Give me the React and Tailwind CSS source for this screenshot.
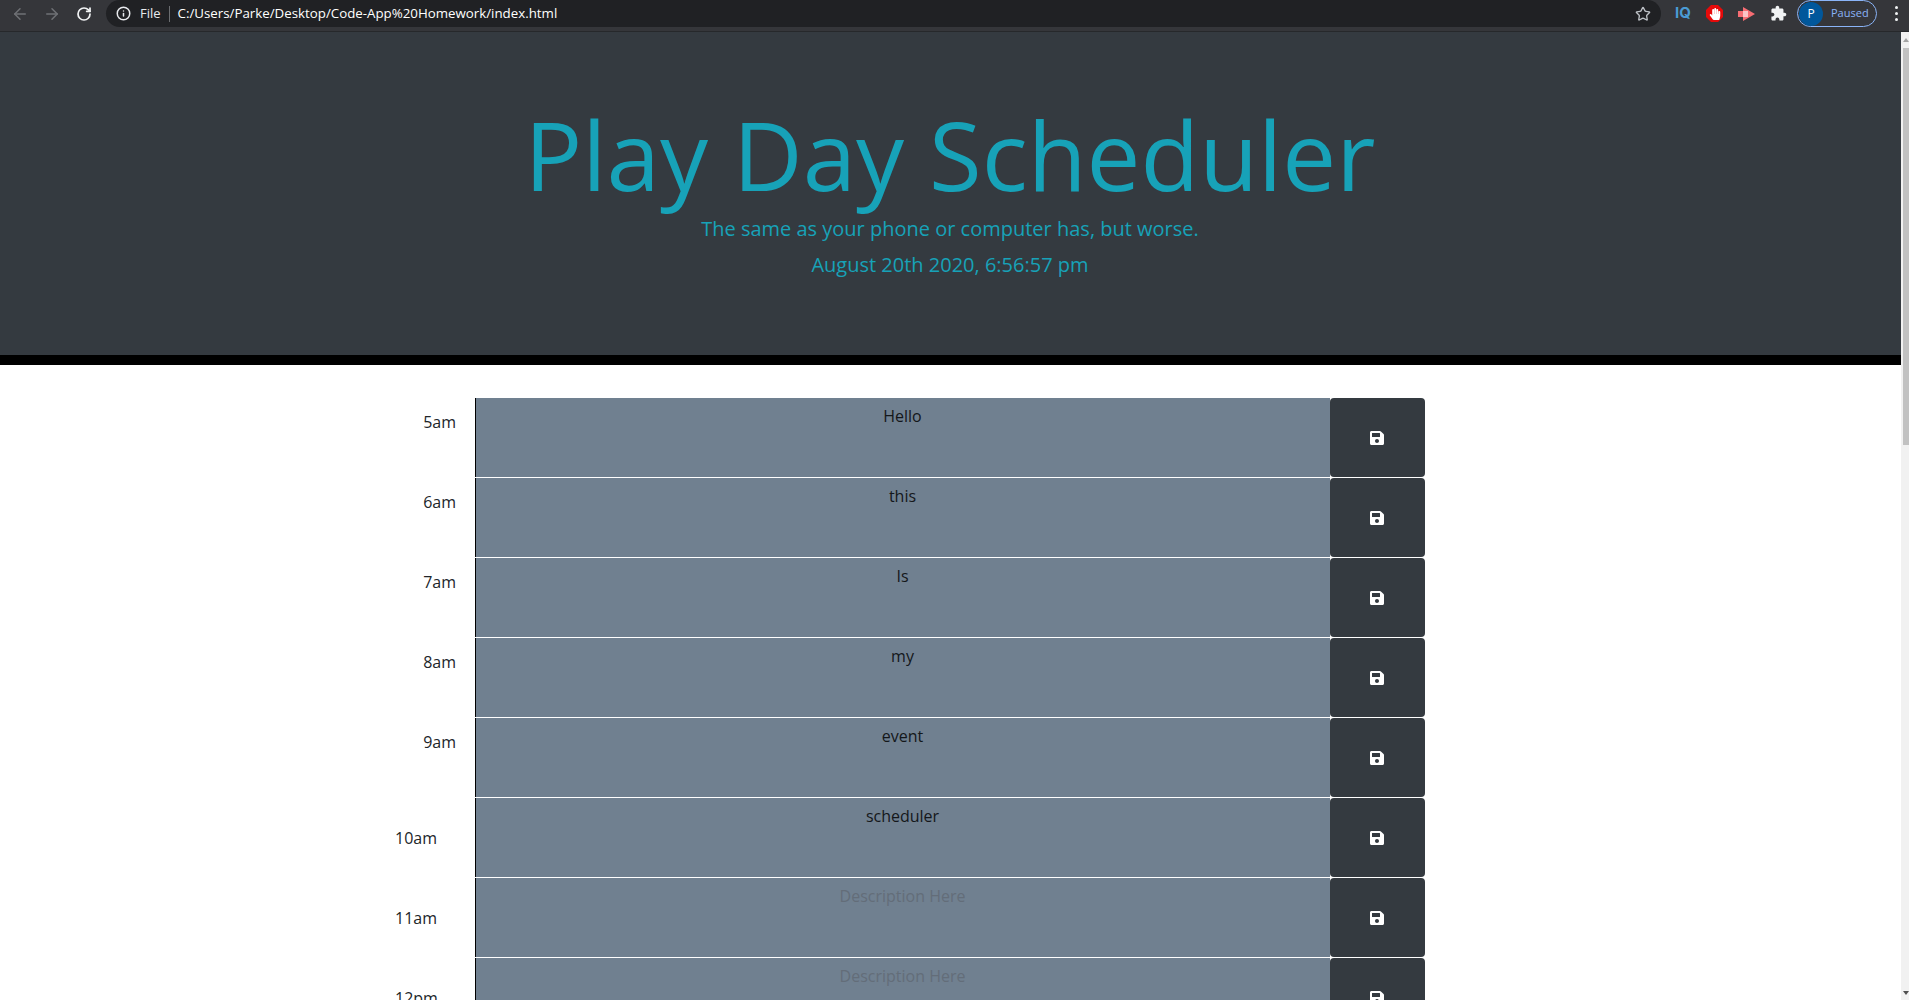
import React from 'react';
import { ArrowLeft, ArrowRight, RotateCw, Info, Star } from 'lucide-react';
import { FaSave, FaHandPaper } from 'react-icons/fa';

const hours = [
  { label: '5am', text: 'Hello', narrow: true },
  { label: '6am', text: 'this', narrow: true },
  { label: '7am', text: 'Is', narrow: true },
  { label: '8am', text: 'my', narrow: true },
  { label: '9am', text: 'event', narrow: true },
  { label: '10am', text: 'scheduler' },
  { label: '11am', text: '' },
  { label: '12pm', text: '' },
];

const Toolbar = () => (
  <div className="flex h-8 shrink-0 items-start border-b border-[#26282b] bg-[#35363a] font-['Open_Sans',sans-serif] text-[13px]">
    <div className="flex h-[27px] w-[106px] shrink-0 items-center pl-[11px] gap-[14px]">
      <ArrowLeft size={18} className="text-[#6f7175]" />
      <ArrowRight size={18} className="text-[#6f7175]" />
      <RotateCw size={16} strokeWidth={2.6} className="text-[#f1f3f4] ml-[1px]" />
    </div>
    <div className="flex h-[27px] flex-1 items-center rounded-full bg-[#202124] pl-[10px] pr-[10px] text-[#e8eaed]">
      <Info size={15} strokeWidth={2.4} className="shrink-0" />
      <span className="ml-[9px]">File</span>
      <span className="ml-[8px] h-[16px] w-px bg-[#6b6d70]" />
      <span className="ml-[8px] text-[13.3px] text-white">C:/Users/Parke/Desktop/Code-App%20Homework/index.html</span>
      <Star size={16} className="ml-auto text-[#bdc1c6]" />
    </div>
    <div className="flex h-[27px] w-[248px] shrink-0 items-center">
      <span className="ml-[14px] w-[20px] font-['Inter',sans-serif] text-[15px] font-bold text-[#4a9bd4]">IQ</span>
      <svg className="ml-[11px]" width="17" height="17" viewBox="0 0 17 17">
        <path d="M5 0h7l5 5v7l-5 5H5l-5-5V5z" fill="#e60a0a" />
      </svg>
      <FaHandPaper size={12} className="-ml-[14.5px] mr-[2.5px] text-white" />
      <svg className="ml-[15px]" width="17" height="14" viewBox="0 0 17 14">
        <path d="M0 4h5V0l12 7-12 7v-4H0z" fill="#f76d73" />
        <path d="M5 4h5v6H5z" fill="#fbc3c6" />
      </svg>
      <svg className="ml-[15px] text-[#f1f3f4]" width="17" height="17" viewBox="0 0 24 24" fill="currentColor">
        <path d="M20.5 11H19V7c0-1.1-.9-2-2-2h-4V3.5C13 2.12 11.88 1 10.5 1S8 2.12 8 3.5V5H4c-1.1 0-1.99.9-1.99 2v3.8H3.5c1.49 0 2.7 1.21 2.7 2.7s-1.21 2.7-2.7 2.7H2V20c0 1.1.9 2 2 2h3.8v-1.5c0-1.49 1.21-2.7 2.7-2.7 1.49 0 2.7 1.21 2.7 2.7V22H17c1.1 0 2-.9 2-2v-4h1.5c1.38 0 2.5-1.12 2.5-2.5S21.88 11 20.5 11z" />
      </svg>
      <div className="ml-[10px] flex h-[27px] w-[80px] items-center rounded-full border border-[#8ab4f8] pl-[1px]">
        <span className="flex h-6 w-6 items-center justify-center rounded-full bg-[#01579b] text-[12px] text-white">P</span>
        <span className="ml-[8px] text-[11px] text-[#8ab4f8]">Paused</span>
      </div>
      <div className="ml-[18px] flex flex-col gap-[3px]">
        <span className="h-[3px] w-[3px] rounded-full bg-[#f1f3f4]" />
        <span className="h-[3px] w-[3px] rounded-full bg-[#f1f3f4]" />
        <span className="h-[3px] w-[3px] rounded-full bg-[#f1f3f4]" />
      </div>
    </div>
  </div>
);

const Row = ({ label, text, narrow }) => (
  <div className="flex h-20 border-b border-white">
    <div
      className={
        narrow
          ? 'w-[95px] shrink-0 pt-[12px] pr-[19px] text-right text-[#212529]'
          : 'w-[95px] shrink-0 self-center pl-[15px] text-[#212529]'
      }
    >
      {label}
    </div>
    <textarea
      readOnly
      value={text}
      placeholder="Description Here"
      className="min-w-0 flex-1 resize-none border-l border-black bg-[#708090] pt-[6px] pr-px text-center text-[#14171a] outline-none placeholder:text-[#636d79]"
    />
    <button className="flex w-[95px] shrink-0 items-center justify-center rounded-[4px] bg-[#343a40] pr-px text-white">
      <FaSave size={16} />
    </button>
  </div>
);

const Scrollbar = () => (
  <div className="relative w-2 shrink-0 bg-[#f1f1f1]">
    <svg className="absolute left-[2px] top-[6px]" width="6" height="4" viewBox="0 0 6 4">
      <path d="M3 0l3 4H0z" fill="#a3a3a3" />
    </svg>
    <div className="absolute left-[2px] right-0 top-[16px] h-[397px] bg-[#c1c1c1]" />
    <svg className="absolute bottom-[5px] left-[2px]" width="6" height="4" viewBox="0 0 6 4">
      <path d="M0 0h6L3 4z" fill="#505050" />
    </svg>
  </div>
);

const App = () => (
  <div className="flex h-screen flex-col overflow-hidden bg-white font-['Open_Sans',sans-serif] text-base">
    <Toolbar />
    <div className="flex min-h-0 flex-1">
      <main className="min-w-0 flex-1 overflow-hidden">
        <header className="flex h-[333px] flex-col items-center border-b-[10px] border-black bg-[#343a40] pt-[64px] pr-px text-[#17a2b8]">
          <h1 className="text-[96px] font-normal leading-[115px]">Play Day Scheduler</h1>
          <p className="mt-[3px] text-[20px] leading-[30px]">The same as your phone or computer has, but worse.</p>
          <p className="mt-[6px] text-[20px] leading-[30px]">August 20th 2020, 6:56:57 pm</p>
        </header>
        <div className="mx-auto mt-[33px] w-[1141px]">
          <div className="w-[1045px]">
            {hours.map((hour) => (
              <Row key={hour.label} {...hour} />
            ))}
          </div>
        </div>
      </main>
      <Scrollbar />
    </div>
  </div>
);

export default App;
